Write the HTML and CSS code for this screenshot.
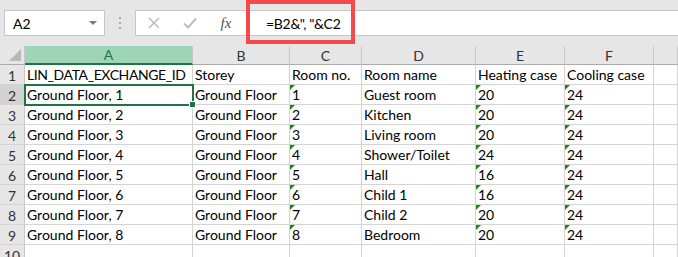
FILE: index.html
```html
<!doctype html>
<html>
    <head>
        <link rel="stylesheet" href="styles.css">
    </head>

    <body>
    <div class="toolbar">
        <div class="name-box">
            <span>A2</span>
            <span class="name-arrow"></span>
        </div>
        <div class="grip">
            <span></span><span></span><span></span>
        </div>
        <div class="formula-bar">
            <span class="fbtn">
                <svg width="12" height="12" viewBox="0 0 12 12"><path d="M1 1 L11 11 M11 1 L1 11" stroke="#bdbdbd" stroke-width="1.6" fill="none"/></svg>
            </span>
            <span class="fbtn">
                <svg width="14" height="12" viewBox="0 0 14 12"><path d="M1 6.5 L5 10.5 L13 1.5" stroke="#bdbdbd" stroke-width="2" fill="none"/></svg>
            </span>
            <span class="fbtn fx">fx</span>
            <span class="formula-text">=B2&amp;", "&amp;C2</span>
        </div>
        <div class="callout"></div>
    </div>

    <div class="sheet">
        <div class="hd corner"></div>
        <div class="hd col active">A</div>
        <div class="hd col">B</div>
        <div class="hd col">C</div>
        <div class="hd col">D</div>
        <div class="hd col">E</div>
        <div class="hd col">F</div>
        <div class="hd col"></div>

        <div class="hd row">1</div>
        <div class="cell tight">LIN_DATA_EXCHANGE_ID</div>
        <div class="cell">Storey</div>
        <div class="cell">Room no.</div>
        <div class="cell">Room name</div>
        <div class="cell">Heating case</div>
        <div class="cell">Cooling case</div>
        <div class="cell"></div>

        <div class="hd row selected">2</div>
        <div class="cell current">Ground Floor, 1</div>
        <div class="cell">Ground Floor</div>
        <div class="cell flag">1</div>
        <div class="cell">Guest room</div>
        <div class="cell flag">20</div>
        <div class="cell flag">24</div>
        <div class="cell"></div>

        <div class="hd row">3</div>
        <div class="cell">Ground Floor, 2</div>
        <div class="cell">Ground Floor</div>
        <div class="cell flag">2</div>
        <div class="cell">Kitchen</div>
        <div class="cell flag">20</div>
        <div class="cell flag">24</div>
        <div class="cell"></div>

        <div class="hd row">4</div>
        <div class="cell">Ground Floor, 3</div>
        <div class="cell">Ground Floor</div>
        <div class="cell flag">3</div>
        <div class="cell">Living room</div>
        <div class="cell flag">20</div>
        <div class="cell flag">24</div>
        <div class="cell"></div>

        <div class="hd row">5</div>
        <div class="cell">Ground Floor, 4</div>
        <div class="cell">Ground Floor</div>
        <div class="cell flag">4</div>
        <div class="cell">Shower/Toilet</div>
        <div class="cell flag">24</div>
        <div class="cell flag">24</div>
        <div class="cell"></div>

        <div class="hd row">6</div>
        <div class="cell">Ground Floor, 5</div>
        <div class="cell">Ground Floor</div>
        <div class="cell flag">5</div>
        <div class="cell">Hall</div>
        <div class="cell flag">16</div>
        <div class="cell flag">24</div>
        <div class="cell"></div>

        <div class="hd row">7</div>
        <div class="cell">Ground Floor, 6</div>
        <div class="cell">Ground Floor</div>
        <div class="cell flag">6</div>
        <div class="cell">Child 1</div>
        <div class="cell flag">16</div>
        <div class="cell flag">24</div>
        <div class="cell"></div>

        <div class="hd row">8</div>
        <div class="cell">Ground Floor, 7</div>
        <div class="cell">Ground Floor</div>
        <div class="cell flag">7</div>
        <div class="cell">Child 2</div>
        <div class="cell flag">20</div>
        <div class="cell flag">24</div>
        <div class="cell"></div>

        <div class="hd row">9</div>
        <div class="cell">Ground Floor, 8</div>
        <div class="cell">Ground Floor</div>
        <div class="cell flag">8</div>
        <div class="cell">Bedroom</div>
        <div class="cell flag">20</div>
        <div class="cell flag">24</div>
        <div class="cell"></div>

        <div class="hd row">10</div>
        <div class="cell"></div>
        <div class="cell"></div>
        <div class="cell"></div>
        <div class="cell"></div>
        <div class="cell"></div>
        <div class="cell"></div>
        <div class="cell"></div>
    </div>
    </body>
</html>
```

FILE: styles.css
```css
body {
    margin: 0;
    width: 678px;
    height: 257px;
    overflow: hidden;
    background-color: #e6e6e6;
    font-family: Lato, "Liberation Sans", sans-serif;
    font-size: 14px;
    color: #000;
}
* {
    box-sizing: border-box;
}

/* ===== Formula toolbar ===== */
.toolbar {
    position: relative;
    display: flex;
    align-items: flex-start;
    height: 46px;
    padding: 10px 0 0 4px;
}

.name-box {
    width: 101px;
    height: 26px;
    display: flex;
    align-items: center;
    justify-content: space-between;
    padding: 0 7px 0 8px;
    background-color: #fff;
    border: 1px solid #c6c6c6;
}

.name-arrow {
    width: 0;
    height: 0;
    border-left: 4px solid transparent;
    border-right: 4px solid transparent;
    border-top: 4px solid #7a7a7a;
}

.grip {
    width: 30px;
    height: 26px;
    display: flex;
    flex-direction: column;
    align-items: center;
    justify-content: center;
    gap: 3px;
}

.grip span {
    width: 2px;
    height: 2px;
    background-color: #a8a8a8;
}

.formula-bar {
    flex: 1;
    height: 26px;
    display: flex;
    align-items: center;
    background-color: #fff;
    border: 1px solid #c6c6c6;
    border-right: none;
}

.fbtn {
    flex: none;
    width: 36px;
    display: flex;
    justify-content: center;
    align-items: center;
}

.fx {
    font-family: "Liberation Serif", serif;
    font-style: italic;
    font-size: 15px;
    color: #555;
}

.formula-text {
    margin-left: 22px;
    letter-spacing: -0.3px;
    white-space: pre;
}

/* red highlight round the formula */
.callout {
    position: absolute;
    left: 246px;
    top: 0;
    width: 109px;
    height: 44px;
    border: 4px solid #f54a4a;
}

/* ===== Sheet grid ===== */
.sheet {
    display: grid;
    grid-template-columns: 25px 168px 97px 72px 114px 89px 89px 1fr;
    grid-template-rows: 19px;
    grid-auto-rows: 20px;
    background-color: #fff;
}

.hd {
    background-color: #e6e6e6;
    color: #333;
    display: flex;
    align-items: center;
    justify-content: center;
    line-height: 1;
}

.col {
    border-right: 1px solid #c8c8c8;
    border-bottom: 1px solid #ababab;
    padding-top: 1px;
}

.col.active {
    background-color: #9fd5b7;
    color: #217346;
    border-bottom: 2px solid #217346;
}

.corner {
    position: relative;
    border-right: 1px solid #c8c8c8;
    border-bottom: 1px solid #ababab;
}

.corner::after {
    content: "";
    position: absolute;
    right: 3px;
    bottom: 3px;
    width: 0;
    height: 0;
    border-left: 12px solid transparent;
    border-bottom: 12px solid #b8b8b8;
}

.row {
    border-right: 1px solid #c8c8c8;
    border-bottom: 1px solid #d4d4d4;
    padding-top: 2px;
}

.row.selected {
    background-color: #d2d2d2;
}

.cell {
    position: relative;
    display: flex;
    align-items: flex-end;
    padding: 0 2px 0 2px;
    line-height: 19px;
    white-space: nowrap;
    overflow: hidden;
    border-right: 1px solid #d4d4d4;
    border-bottom: 1px solid #d4d4d4;
}

.tight {
    letter-spacing: -0.4px;
}

/* number stored as text marker */
.flag::before {
    content: "";
    position: absolute;
    left: 0;
    top: 0;
    width: 0;
    height: 0;
    border-top: 5px solid #1b8a1b;
    border-right: 5px solid transparent;
}

.current {
    overflow: visible;
}

.current::after {
    content: "";
    position: absolute;
    left: -1px;
    top: -1px;
    right: -2px;
    bottom: -2px;
    border: 2px solid #217346;
}

.current::before {
    content: "";
    position: absolute;
    right: -4px;
    bottom: -4px;
    width: 5px;
    height: 5px;
    background-color: #217346;
    border: 1px solid #fff;
    z-index: 1;
}
```
